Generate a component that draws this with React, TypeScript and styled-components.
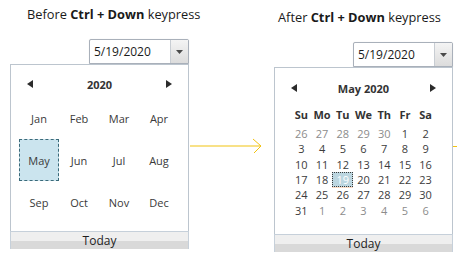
import styled, { createGlobalStyle } from "styled-components";

const GlobalStyle = createGlobalStyle`
  body {
    margin: 0;
    background: #ffffff;
    font-family: "Open Sans", "Noto Sans", sans-serif;
  }
`;

const MONTHS = ["Jan", "Feb", "Mar", "Apr", "May", "Jun", "Jul", "Aug", "Sep", "Oct", "Nov", "Dec"];
const DAY_NAMES = ["Su", "Mo", "Tu", "We", "Th", "Fr", "Sa"];

type Day = { n: number; other?: boolean };

function buildDays(): Day[] {
  const days: Day[] = [];
  for (let d = 26; d <= 30; d++) days.push({ n: d, other: true });
  for (let d = 1; d <= 31; d++) days.push({ n: d });
  for (let d = 1; d <= 6; d++) days.push({ n: d, other: true });
  return days;
}

function Triangle({ dir }: { dir: "left" | "right" }) {
  return (
    <svg width="6" height="8" viewBox="0 0 6 8">
      {dir === "left" ? (
        <polygon points="6,0 6,8 0,4" fill="#2b2b2b" />
      ) : (
        <polygon points="0,0 0,8 6,4" fill="#2b2b2b" />
      )}
    </svg>
  );
}

function ComboBox() {
  return (
    <Combo>
      <ComboText>5/19/2020</ComboText>
      <DropButton>
        <svg width="7" height="4" viewBox="0 0 7 4">
          <polygon points="0,0 7,0 3.5,4" fill="#4a4a4a" />
        </svg>
      </DropButton>
    </Combo>
  );
}

export default function App() {
  const days = buildDays();

  return (
    <>
      <GlobalStyle />
      <Page>
        <Panel>
          <Title $top={5} $left={17}>
            Before <b>Ctrl + Down</b> keypress
          </Title>
          <ComboBox />
          <Popup>
            <PopupBody>
              <Header $top={7}>
                <Triangle dir="left" />
                <HeaderText>2020</HeaderText>
                <Triangle dir="right" />
              </Header>
              <MonthGrid>
                {MONTHS.map((m) => (
                  <MonthCell key={m} $selected={m === "May"}>
                    {m}
                  </MonthCell>
                ))}
              </MonthGrid>
            </PopupBody>
            <TodayBar>Today</TodayBar>
          </Popup>
        </Panel>

        <Connector>
          <svg width="74" height="16" viewBox="0 0 74 16">
            <line x1="1" y1="8" x2="72" y2="8" stroke="#f2c311" strokeWidth="1.2" />
            <polyline points="64,1 72,8 65,15" fill="none" stroke="#f2c311" strokeWidth="1" />
          </svg>
        </Connector>

        <Panel $offset={2}>
          <Title $top={6} $left={4}>
            After <b>Ctrl + Down</b> keypress
          </Title>
          <ComboBox />
          <Popup>
            <PopupBody>
              <Header $top={8}>
                <Triangle dir="left" />
                <HeaderText>May 2020</HeaderText>
                <Triangle dir="right" />
              </Header>
              <DayGrid>
                {DAY_NAMES.map((d) => (
                  <DayName key={d}>{d}</DayName>
                ))}
              </DayGrid>
              <DateGrid>
                {days.map((d, i) => (
                  <DateCell key={i} $other={d.other} $selected={!d.other && d.n === 19}>
                    {d.n}
                  </DateCell>
                ))}
              </DateGrid>
            </PopupBody>
            <TodayBar>Today</TodayBar>
          </Popup>
        </Panel>

        <Tick />
      </Page>
    </>
  );
}

const Page = styled.div`
  display: flex;
  align-items: flex-start;
  width: 474px;
  height: 265px;
  padding-left: 10px;
  box-sizing: border-box;
  overflow: hidden;
`;

const Panel = styled.div<{ $offset?: number }>`
  display: flex;
  flex-direction: column;
  width: 179px;
  flex-shrink: 0;
  padding-top: ${(p) => p.$offset ?? 0}px;
`;

const Title = styled.div<{ $top: number; $left: number }>`
  height: 18px;
  line-height: 18px;
  margin-top: ${(p) => p.$top}px;
  padding-left: ${(p) => p.$left}px;
  font-size: 12.8px;
  color: #1a1a1a;
  white-space: nowrap;

  b {
    font-weight: 700;
  }
`;

const Combo = styled.div`
  display: flex;
  align-self: flex-end;
  width: 100px;
  height: 25px;
  margin-top: 16px;
  box-sizing: border-box;
  border: 1px solid #a9b0ba;
  border-radius: 2px 2px 0 0;
  background: #ffffff;
  box-shadow: 0 0 1px rgba(0, 0, 0, 0.15);
`;

const ComboText = styled.div`
  flex: 1;
  padding-left: 4px;
  font-size: 12px;
  line-height: 23px;
  color: #1b1b1b;
`;

const DropButton = styled.div`
  display: flex;
  align-items: center;
  justify-content: center;
  width: 17px;
  background: linear-gradient(#f4f4f4, #dcdcdc);
  border-left: 1px solid #c8cdd3;
`;

const Popup = styled.div`
  display: flex;
  flex-direction: column;
`;

const PopupBody = styled.div`
  display: flex;
  flex-direction: column;
  height: 167px;
  box-sizing: border-box;
  border: 1px solid #bcc5ce;
  border-bottom: none;
  background: #ffffff;
`;

const Header = styled.div<{ $top: number }>`
  display: flex;
  align-items: center;
  justify-content: space-between;
  height: 26px;
  margin-top: ${(p) => p.$top - 1}px;
  padding: 0 16px;
`;

const HeaderText = styled.div`
  font-size: 11px;
  font-weight: 700;
  color: #333333;
`;

const MonthGrid = styled.div`
  display: grid;
  grid-template-columns: repeat(4, 40px);
  grid-auto-rows: 42px;
  margin-left: 8px;
`;

const MonthCell = styled.div<{ $selected?: boolean }>`
  display: flex;
  align-items: center;
  justify-content: center;
  box-sizing: border-box;
  font-size: 11px;
  color: #3a3a3a;
  background: ${(p) => (p.$selected ? "#cbe4ee" : "transparent")};
  border: 1px dashed ${(p) => (p.$selected ? "#3a6a7a" : "transparent")};
`;

const DayGrid = styled.div`
  display: grid;
  grid-template-columns: repeat(7, 1fr);
  width: 145px;
  height: 16px;
  margin: 5px 0 0 16px;
`;

const DayName = styled.div`
  display: flex;
  align-items: center;
  justify-content: center;
  font-size: 11px;
  font-weight: 700;
  color: #333333;
`;

const DateGrid = styled.div`
  display: grid;
  grid-template-columns: repeat(7, 1fr);
  grid-auto-rows: 15.3px;
  width: 145px;
  margin: 4px 0 0 16px;
`;

const DateCell = styled.div<{ $other?: boolean; $selected?: boolean }>`
  display: flex;
  align-items: center;
  justify-content: center;
  box-sizing: border-box;
  font-size: 11px;
  color: ${(p) => (p.$selected ? "#ffffff" : p.$other ? "#8c8c8c" : "#3c3c3c")};
  background: ${(p) => (p.$selected ? "#bcd6e0" : "transparent")};
  border: 1px dotted ${(p) => (p.$selected ? "#3a3a3a" : "transparent")};
  box-shadow: ${(p) => (p.$selected ? "0 1px 0 #fbdcc6" : "none")};
`;

const TodayBar = styled.div`
  height: 18px;
  box-sizing: border-box;
  border: 1px solid #c6d0da;
  border-bottom: none;
  background: linear-gradient(#efefef 0%, #efefef 55%, #d9d9d9 55%, #d9d9d9 100%);
  text-align: center;
  font-size: 12px;
  line-height: 17px;
  color: #1e1e1e;
`;

const Connector = styled.div`
  display: flex;
  width: 85px;
  flex-shrink: 0;
  margin-top: 138px;
`;

const Tick = styled.div`
  width: 4px;
  height: 1px;
  margin-top: 146px;
  background: #f2c311;
`;
